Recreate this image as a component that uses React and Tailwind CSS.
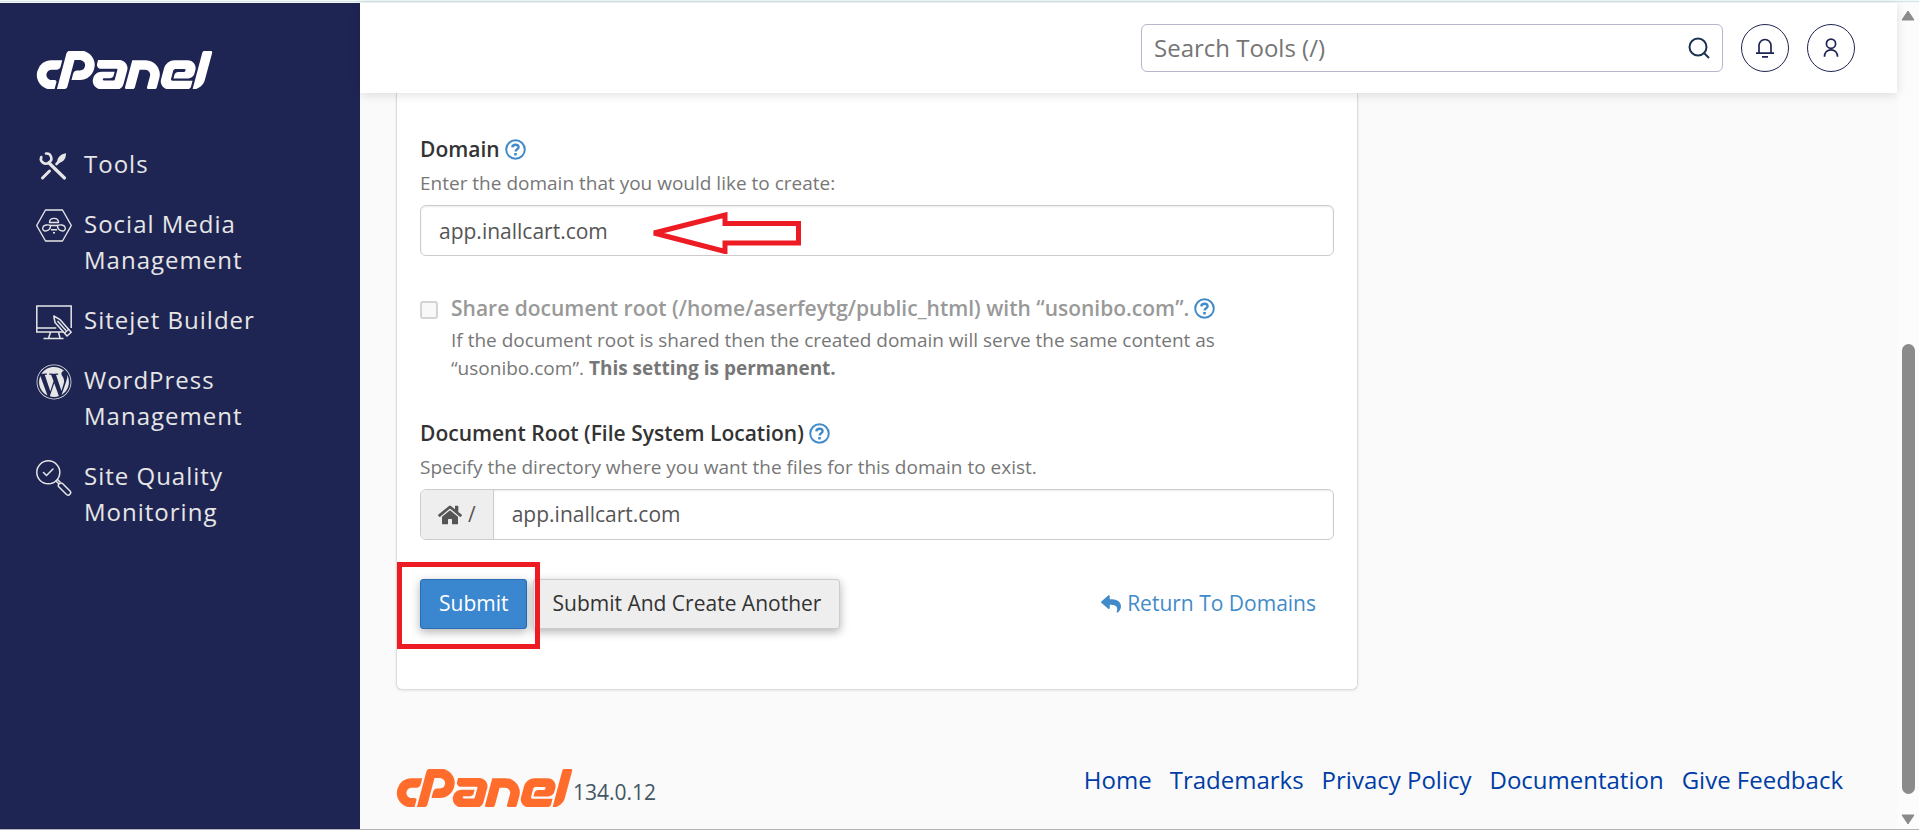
import React from "react";
import { FaHome, FaReply, FaWordpress } from "react-icons/fa";
import { SiCpanel } from "react-icons/si";

const ToolsIcon = ({ className }) => (
  <svg viewBox="0 -1 36 36" className={className} fill="none" stroke="currentColor" strokeLinecap="round">
    <path d="M6.500 29L13.500 22" strokeWidth="3" />
    <path d="M13 14L28.500 29" strokeWidth="3.200" />
    <path d="M5.300 8a4.800 4.800 0 0 0 7.500 5.500a4.800 4.800 0 0 0-2.800-9" strokeWidth="2.600" />
    <path d="M20.500 15l2.500-2.500" strokeWidth="2.600" />
    <path d="M22 13c0-3.500 3-7 7-7.500c-.200 4.500-3 7.500-7 7.500z" fill="currentColor" strokeWidth="2" />
  </svg>
);

const BeeIcon = ({ className }) => (
  <svg viewBox="0 0 36 36" className={className} fill="none" stroke="currentColor" strokeWidth="1.400" strokeLinejoin="round">
    <path d="M9.500 2h17L35.300 17.500l-8.800 15.500h-17L.700 17.500z" />
    <path d="M13.500 14.500c0-5.500 9-5.500 9 0z" />
    <path d="M14.500 17.500c-2.500-1.200-6.500-.500-7.500 1.500c-1.200 2.800 1 4.800 4 3.700c2.200-.700 3.500-2.700 3.500-5.200z" />
    <path d="M21.500 17.500c2.500-1.200 6.500-.500 7.500 1.500c1.200 2.800-1 4.800-4 3.700c-2.200-.700-3.500-2.700-3.500-5.200z" />
    <path d="M14.500 17.500h7M15 21.800h6M17 24.800h2" />
  </svg>
);

const SitejetIcon = ({ className }) => (
  <svg viewBox="0 0 36 36" className={className} fill="none" stroke="currentColor" strokeWidth="1.500">
    <path d="M35.200 24V2H.800v26h27" />
    <path d="M.800 24h19.500" />
    <path d="M14.500 28l-1.800 6M22.500 28l1.500 6M7.500 34.500h20" />
    <path d="M17.800 12l1.200 6.500l12 13.500l4.200-3.700l-11.500-13z" strokeLinejoin="round" />
    <path d="M28.500 29l4-3.500M21.500 17l8.500 9.500" />
  </svg>
);

const QualityIcon = ({ className }) => (
  <svg viewBox="0 0 36 36" className={className} fill="none" stroke="currentColor" strokeWidth="1.500" strokeLinecap="round" strokeLinejoin="round">
    <circle cx="12.300" cy="12.300" r="11.500" />
    <path d="M7.500 12.500l3 3l6.500-6.500" />
    <path d="M20 21l2.500 2.500M21.500 19.500l2.500 2.500" />
    <path d="M22.500 26.500c-1-2 2-4.500 4-3l7.500 7.500c2 2-1 5.500-3.500 3.500z" />
  </svg>
);

const SearchIcon = () => (
  <svg viewBox="0 0 22 22" className="w-[22px] h-[22px]" fill="none" stroke="currentColor" strokeWidth="2">
    <circle cx="10" cy="10" r="8.500" />
    <path d="M16 16l5 5" />
  </svg>
);

const BellIcon = () => (
  <svg viewBox="0 0 20 20" className="w-5 h-5" fill="none" stroke="currentColor" strokeWidth="1.700">
    <path d="M4 15V7.500a6 6 0 0 1 12 0V15M1 15.200h18M7 18.800h6" />
  </svg>
);

const UserIcon = () => (
  <svg viewBox="0 0 20 20" className="w-5 h-5" fill="none" stroke="currentColor" strokeWidth="1.700">
    <circle cx="10" cy="5.700" r="4.600" />
    <path d="M3.500 18.800c0-4.300 2.800-7 6.500-7s6.500 2.700 6.500 7" />
  </svg>
);

const HelpButton = ({ label }) => (
  <button type="button" aria-label={label} className="text-[#428bca]">
    <svg viewBox="0 0 21 21" className="w-[21px] h-[21px]" fill="none" stroke="currentColor">
      <circle cx="10.500" cy="10.500" r="9.300" strokeWidth="2" />
      <path d="M7.300 8.300c.300-3.500 6.300-3.500 6.300 0c0 2-3 1.800-3 4.200" strokeWidth="2.400" />
      <path d="M10.500 14v2.500" strokeWidth="2.600" />
    </svg>
  </button>
);

const navItems = [
  { icon: ToolsIcon, title: "Tools" },
  { icon: BeeIcon, title: "Social Media Management" },
  { icon: SitejetIcon, title: "Sitejet Builder" },
  { icon: FaWordpress, title: "WordPress Management" },
  { icon: QualityIcon, title: "Site Quality Monitoring" },
];

const footerLinks = ["Home", "Trademarks", "Privacy Policy", "Documentation", "Give Feedback"];

const Sidebar = () => (
  <aside className="w-[360px] shrink-0 bg-[#1f2553] px-9 pt-12">
    <a href="#home" aria-label="cPanel" className="block text-white">
      <SiCpanel viewBox="0 9.400 24 5.200" className="w-[177px] h-[38px]" />
    </a>
    <nav className="mt-[57px] flex flex-col gap-6 pr-16">
      {navItems.map((item) => (
        <a key={item.title} href="#nav" className="flex items-start gap-3 text-2xl leading-9 tracking-[1px] text-[#e6e6e6]">
          <item.icon className="mt-0.5 -mb-0.5 w-9 h-9 shrink-0" />
          <span>{item.title}</span>
        </a>
      ))}
    </nav>
  </aside>
);

const Header = () => (
  <header className="relative z-10 flex h-[90px] shrink-0 items-center justify-end gap-[18px] bg-white pr-[42px] shadow-[0_2px_10px_rgba(0,0,0,0.12)]">
    <div className="flex h-12 w-[582px] items-center rounded-md border border-[#b9b6cc] px-3 text-[#1b3350]">
      <input
        type="search"
        aria-label="Search Tools"
        placeholder="Search Tools (/)"
        className="min-w-0 flex-1 bg-transparent text-2xl outline-none placeholder:text-[#757575]"
      />
      <SearchIcon />
    </div>
    <button aria-label="Notifications" className="flex h-12 w-12 items-center justify-center rounded-full border border-[#1f2553] text-[#1f2553]">
      <BellIcon />
    </button>
    <button aria-label="Account" className="flex h-12 w-12 items-center justify-center rounded-full border border-[#1f2553] text-[#1f2553]">
      <UserIcon />
    </button>
  </header>
);

const DomainForm = () => (
  <form className="relative w-[962px] rounded-b-md border border-t-0 border-[#dcdcdc] bg-white px-[23px] pt-10 pb-[60px] shadow-[0_1px_3px_rgba(0,0,0,0.08)]">
    {/* Domain */}
    <div className="flex items-center gap-[5px]">
      <label htmlFor="domain" className="text-[21px] leading-8 font-semibold text-[#333333]">Domain</label>
      <HelpButton label="About the domain" />
    </div>
    <p className="mt-1 text-[19px] leading-7 text-[#777777]">Enter the domain that you would like to create:</p>
    <div className="relative mt-2">
      <input
        id="domain"
        defaultValue="app.inallcart.com"
        className="block h-[51px] w-full rounded-md border border-[#cccccc] px-[18px] text-[21px] text-[#555555] shadow-[inset_0_1px_2px_rgba(0,0,0,0.08)]"
      />
      <svg viewBox="0 0 150 42" className="absolute left-[231px] top-[7px] h-[42px] w-[150px]" fill="none" stroke="#ed1c24" strokeWidth="5">
        <path d="M3 21L74 3v8.500h73.500v19.500H74v8.500z" />
      </svg>
    </div>

    {/* Shared document root */}
    <div className="mt-9 flex gap-[13px]">
      <input
        id="share"
        type="checkbox"
        disabled
        className="mt-[9px] h-[18px] w-[18px] shrink-0 appearance-none rounded-[3px] border-2 border-[#d4d4d4] bg-[#f8f8f8]"
      />
      <div>
        <div className="flex items-center gap-[5px]">
          <label htmlFor="share" className="text-[21px] leading-8 font-semibold text-[#999999]">
            Share document root (/home/aserfeytg/public_html) with “usonibo.com”.
          </label>
          <HelpButton label="About sharing the document root" />
        </div>
        <p className="mt-0.5 max-w-[800px] text-[19px] leading-7 text-[#777777]">
          If the document root is shared then the created domain will serve the same content as “usonibo.com”.{" "}
          <strong className="font-bold">This setting is permanent.</strong>
        </p>
      </div>
    </div>

    {/* Document root */}
    <div className="mt-[35px] flex items-center gap-[5px]">
      <label htmlFor="root" className="text-[21px] leading-8 font-semibold text-[#333333]">
        Document Root (File System Location)
      </label>
      <HelpButton label="About the document root" />
    </div>
    <p className="mt-1 text-[19px] leading-7 text-[#777777]">Specify the directory where you want the files for this domain to exist.</p>
    <div className="mt-2 flex h-[51px] overflow-hidden rounded-md border border-[#cccccc]">
      <span className="flex items-center gap-1.5 border-r border-[#cccccc] bg-[#eeeeee] px-[17px] text-[21px] text-[#555555]">
        <FaHome className="h-6 w-6" />/
      </span>
      <input
        id="root"
        defaultValue="app.inallcart.com"
        className="min-w-0 flex-1 px-[18px] text-[21px] text-[#555555] shadow-[inset_0_1px_2px_rgba(0,0,0,0.08)]"
      />
    </div>

    {/* Actions */}
    <div className="mt-[39px] flex items-center justify-between">
      <div className="relative flex gap-1.5">
        <button type="button" className="h-[50px] rounded-[3px] border border-[#2a6db5] bg-[#3a87cf] px-[18px] text-[21px] text-white shadow-[0_3px_10px_rgba(0,0,0,0.3)]">
          Submit
        </button>
        <button type="button" className="h-[50px] rounded-[3px] border border-[#cccccc] bg-[#eeeeee] px-[18px] text-[21px] text-[#333333] shadow-[0_3px_10px_rgba(0,0,0,0.3)]">
          Submit And Create Another
        </button>
        <span className="pointer-events-none absolute -left-[23px] -top-[17px] h-[87px] w-[143px] border-5 border-[#ed1c24]" />
      </div>
      <a href="#domains" className="mr-[18px] flex items-center gap-1.5 text-[21px] text-[#428bca]">
        <FaReply className="h-5 w-5" />
        Return To Domains
      </a>
    </div>
  </form>
);

const Footer = () => (
  <footer className="mt-auto flex items-start justify-between pt-[71px] pr-[54px] pb-3">
    <div className="flex items-end">
      <SiCpanel viewBox="0 9.400 24 5.200" className="mt-[7px] mb-2.5 w-[177px] h-[38px] text-[#ff6c2c]" />
      <span className="pb-[9px] text-[21px] leading-8 text-[#435663]">134.0.12</span>
    </div>
    <nav className="flex gap-[18px] text-2xl leading-9 text-[#003da6]">
      {footerLinks.map((text) => (
        <a key={text} href="#footer">{text}</a>
      ))}
    </nav>
  </footer>
);

const ScrollRail = () => (
  <div className="flex w-[22px] shrink-0 flex-col items-center bg-[#fcfcfc] pt-[7px] pb-1 text-[#8b8b8b]">
    <svg viewBox="0 0 14 11" className="h-[11px] w-3.5" fill="currentColor" stroke="currentColor" strokeLinejoin="round">
      <path d="M7 1l6 9H1z" />
    </svg>
    <div className="grow-[323]" />
    <div className="w-[13px] grow-[449] rounded-full bg-[#8b8b8b]" />
    <div className="grow-[20]" />
    <svg viewBox="0 0 14 11" className="h-[11px] w-3.5" fill="currentColor" stroke="currentColor" strokeLinejoin="round">
      <path d="M7 10l6-9H1z" />
    </svg>
  </div>
);

const App = () => {
  return (
    <div className="flex min-h-screen flex-col border-b border-[#b4b4b8] bg-[#fafafa] font-['Open_Sans',sans-serif]">
      <div className="h-[3px] border-y border-[#f3f9f9] bg-[#d5e4ea]" />
      <div className="flex flex-1">
        <Sidebar />
        <div className="flex min-w-0 flex-1 flex-col">
          <Header />
          <main className="flex flex-1 flex-col pl-9">
            <DomainForm />
            <Footer />
          </main>
        </div>
        <ScrollRail />
      </div>
    </div>
  );
};

export default App;
